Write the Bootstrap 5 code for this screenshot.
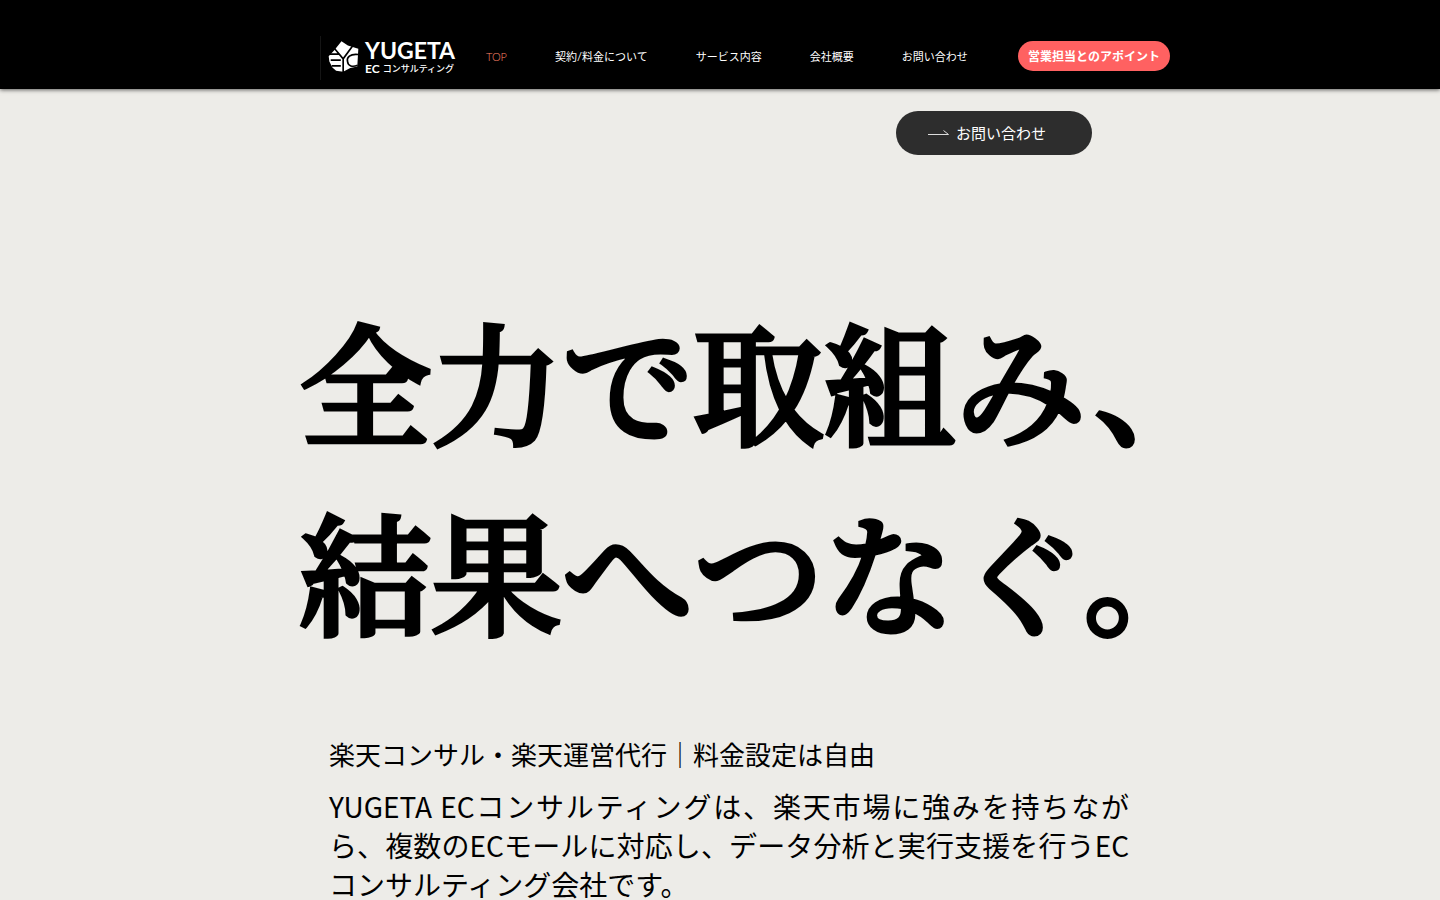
<!DOCTYPE html>
<html lang="ja">
<head>
<meta charset="utf-8">
<meta name="viewport" content="width=device-width, initial-scale=1">
<title>YUGETA EC コンサルティング</title>
<link href="https://cdn.jsdelivr.net/npm/bootstrap@5.3.0/dist/css/bootstrap.min.css" rel="stylesheet">
<style>
body { background: #edece8; color: #000; font-family: "Noto Sans CJK JP", sans-serif; }
.site-wrap { max-width: 980px; margin: 0 auto; }
.site-header { background: #000; box-shadow: 0 1px 4px rgba(0,0,0,.6); padding: 35px 0 9px; }
.header-row { padding: 0 40px 0 90px; min-height: 45px; }
.brand { border-left: 1px solid #151515; padding: 2px 0 4px 7px; gap: 6px; width: 136px; color: #fff; }
.brand-name { font: 700 23px/24px Lato, sans-serif; }
.brand-sub { font-size: 9px; line-height: 14px; font-weight: 500; gap: 3px; }
.brand-sub b { font: 700 12px/14px Lato, sans-serif; }
.menu { gap: 48px; margin-left: 30px; font-size: 11px; line-height: 16px; padding-bottom: 3px; }
.menu a { color: #fff; font-family: Lato, "Noto Sans CJK JP", sans-serif; font-weight: 400; }
.menu a.active { color: #ff8468; font-weight: 300; }
.btn-appoint, .btn-appoint:hover { background: #ff6161; color: #fff; border: 0; border-radius: 15px; font-size: 12px; line-height: 18px; font-weight: 700; padding: 6px 10px; margin-bottom: 3px; }
.btn-contact, .btn-contact:hover { background: #2d2d2d; color: #fff; border: 0; border-radius: 22px; width: 196px; height: 44px; font-size: 15px; line-height: 22px; padding: 0 0 1px 32px; gap: 6px; }
.contact-row { padding: 22px 118px 0 0; }
.hero-title { font: 500 131px/190px "Noto Serif CJK JP", "Noto Serif JP", "Noto Sans CJK JP", serif; -webkit-text-stroke: 5px #000; margin: 128px 0 0 70px; }
.intro { padding: 0 81px 0 99px; margin-top: 71px; }
.intro h2 { font-size: 26px; line-height: 39px; font-weight: 400; margin-bottom: 14px; }
.intro p { font-size: 28px; line-height: 39px; text-align: justify; margin: 0; }
</style>
</head>
<body>
<header class="site-header position-relative">
  <div class="site-wrap header-row d-flex align-items-center">
    <a href="#" class="brand d-flex align-items-center text-decoration-none">
      <svg class="flex-shrink-0" width="31" height="33" viewBox="24 16 92 98" aria-hidden="true">
        <path fill="#fff" d="M64 20 83 32 114 42 111 95 90 99 69 110 48 107 37 98 28 80 26 64 42 47Z"/>
        <g fill="none" stroke="#000" stroke-width="5">
          <path d="M42 40 69 72 98 32M69 72V112M28 58H57M32 76H62M35 93H62"/>
          <path d="M114 59C89 56 79 68 82 80C83 94 97 97 112 91"/>
        </g>
      </svg>
      <span class="d-flex flex-column">
        <span class="brand-name">YUGETA</span>
        <span class="brand-sub d-flex align-items-center text-nowrap"><b>EC</b><span>コンサルティング</span></span>
      </span>
    </a>
    <nav>
      <ul class="menu list-unstyled d-flex mb-0 text-nowrap">
        <li><a class="active text-decoration-none" href="#">TOP</a></li>
        <li><a class="text-decoration-none" href="#">契約/料金について</a></li>
        <li><a class="text-decoration-none" href="#">サービス内容</a></li>
        <li><a class="text-decoration-none" href="#">会社概要</a></li>
        <li><a class="text-decoration-none" href="#">お問い合わせ</a></li>
      </ul>
    </nav>
    <button type="button" class="btn btn-appoint ms-auto text-nowrap">営業担当とのアポイント</button>
  </div>
</header>
<main class="site-wrap">
  <div class="contact-row d-flex justify-content-end">
    <button type="button" class="btn btn-contact d-flex align-items-center">
      <svg width="22" height="8" viewBox="0 0 22 8" fill="none" stroke="#ddd" stroke-width="1" aria-hidden="true"><path d="M0 5.500H20.500L15.500 1.500"/></svg>
      <span>お問い合わせ</span>
    </button>
  </div>
  <h1 class="hero-title text-nowrap">全力で取組み、<br>結果へつなぐ。</h1>
  <section class="intro">
    <h2>楽天コンサル・楽天運営代行｜料金設定は自由</h2>
    <p>YUGETA ECコンサルティングは、楽天市場に強みを持ちながら、複数のECモールに対応し、データ分析と実行支援を行うECコンサルティング会社です。</p>
  </section>
</main>
<script src="https://cdn.jsdelivr.net/npm/bootstrap@5.3.0/dist/js/bootstrap.bundle.min.js"></script>
</body>
</html>
